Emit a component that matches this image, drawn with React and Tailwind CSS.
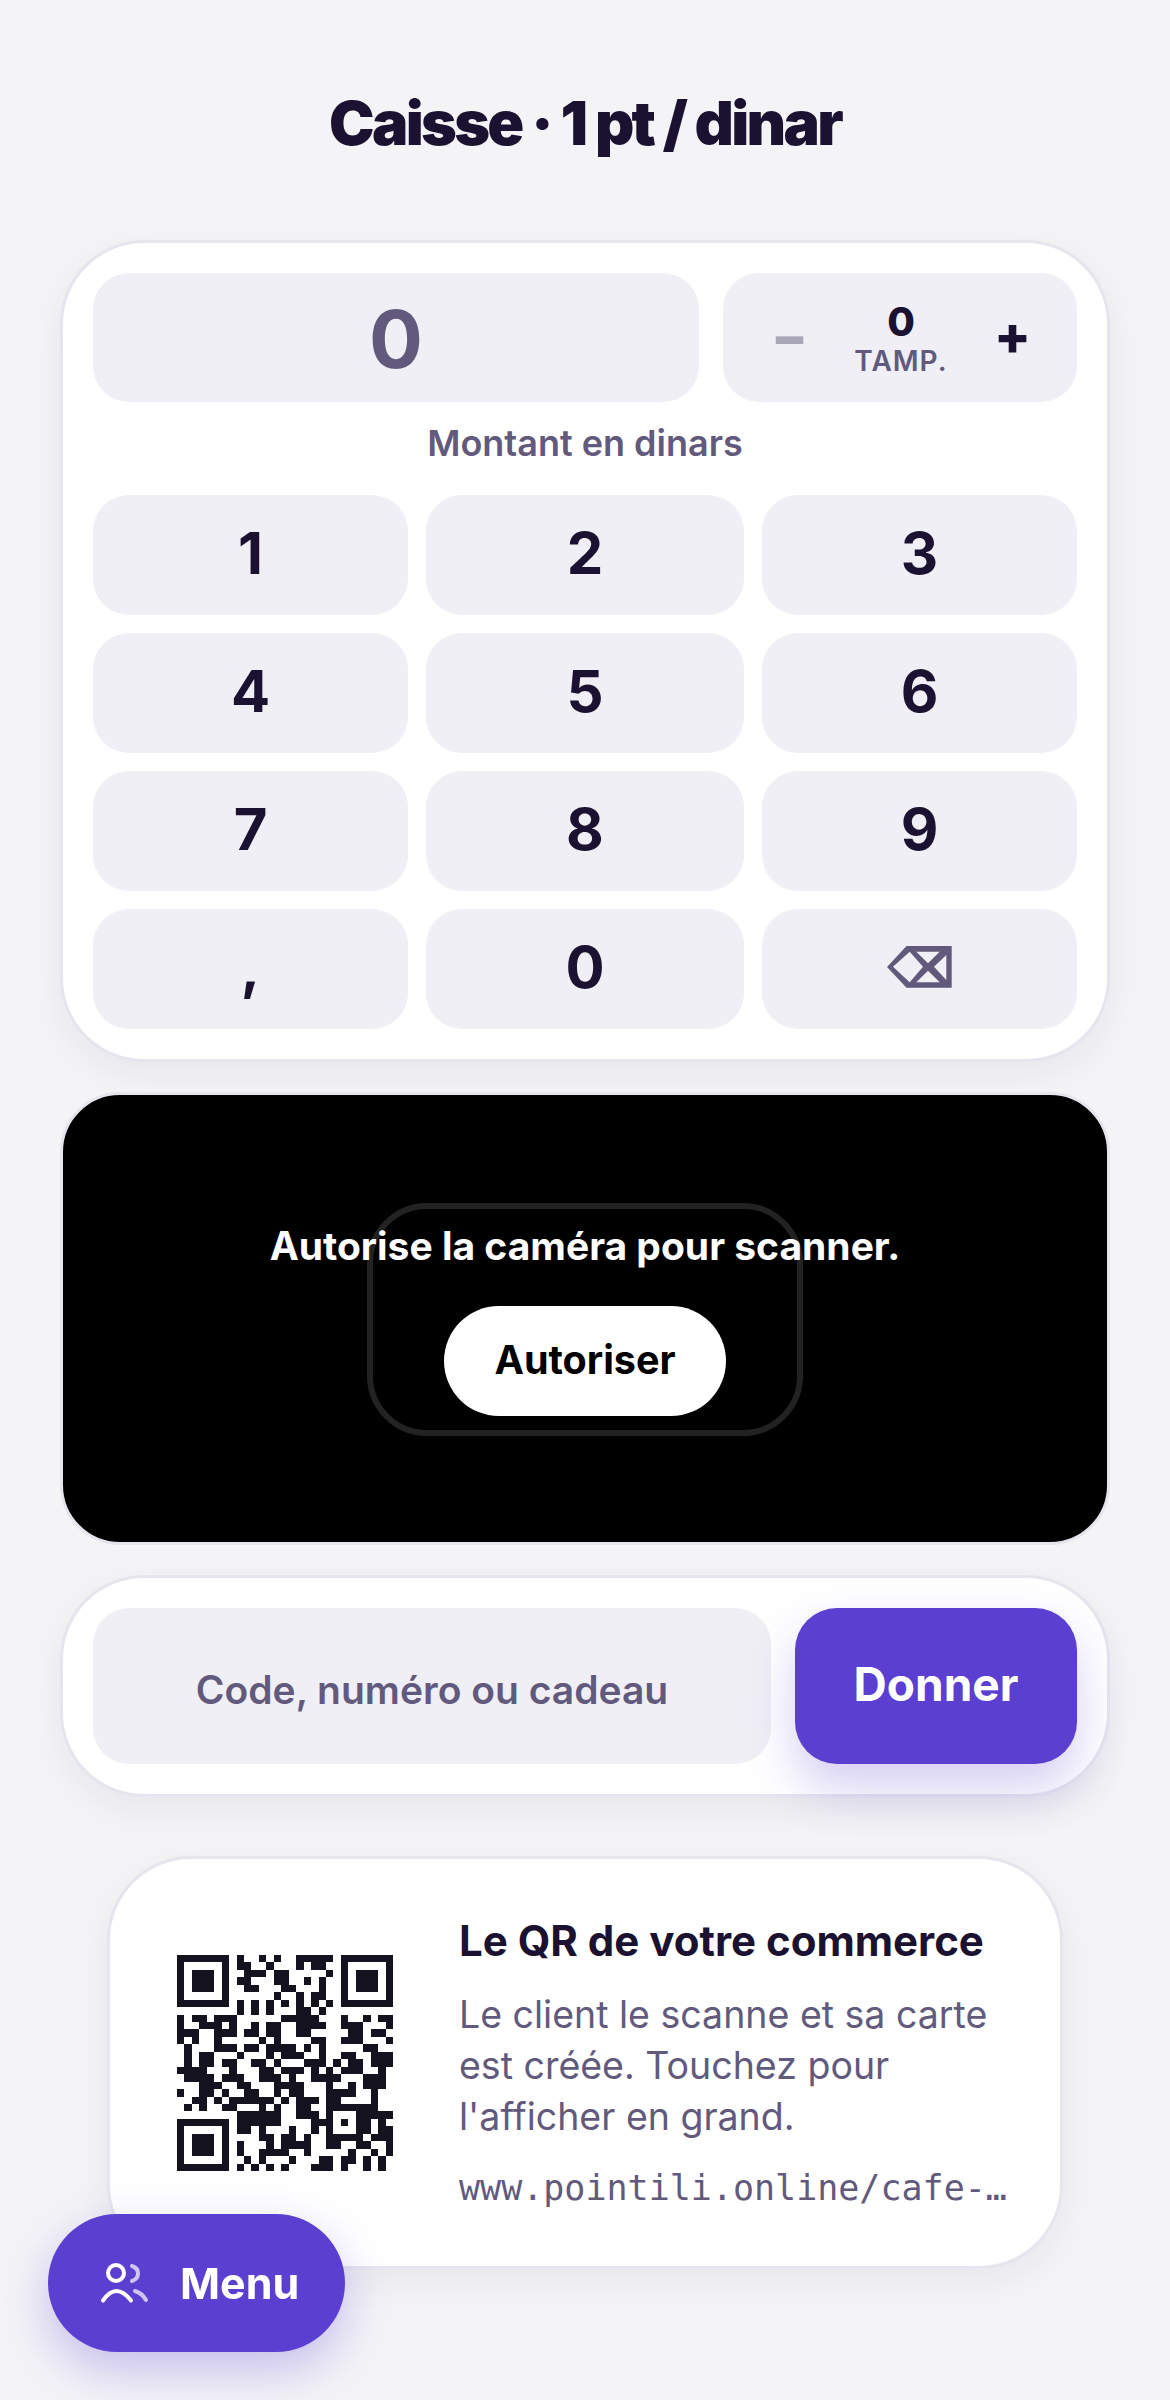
import React from 'react';

// rows of the QR, as [start, end] module spans (finders are drawn by the same data)
const QR_ROWS = [
  [[0,6],[8,8],[11,11],[13,13],[16,20],[22,28]],
  [[0,0],[6,6],[8,9],[12,12],[16,16],[18,19],[22,22],[28,28]],
  [[0,0],[2,4],[6,6],[9,11],[13,14],[20,20],[22,22],[24,26],[28,28]],
  [[0,0],[2,4],[6,6],[8,9],[13,14],[17,17],[19,19],[22,22],[24,26],[28,28]],
  [[0,0],[2,4],[6,6],[9,10],[14,15],[19,19],[22,22],[24,26],[28,28]],
  [[0,0],[6,6],[13,13],[16,16],[18,19],[22,22],[28,28]],
  [[0,6],[8,8],[10,10],[12,12],[14,14],[16,16],[18,18],[20,20],[22,28]],
  [[8,8],[10,10],[12,12],[16,17],[19,19]],
  [[0,0],[2,3],[5,7],[14,18],[22,22],[25,25],[27,28]],
  [[0,0],[3,5],[7,7],[10,10],[12,13],[16,19],[22,24],[28,28]],
  [[0,2],[5,7],[9,10],[12,13],[16,17],[23,24],[26,27]],
  [[0,0],[2,2],[5,5],[11,11],[13,13],[18,19],[22,24],[28,28]],
  [[1,1],[5,7],[9,10],[12,15],[17,17],[19,19],[25,26]],
  [[1,1],[3,4],[8,8],[12,12],[14,16],[19,19],[22,23],[26,28]],
  [[1,1],[3,4],[6,7],[10,11],[13,13],[17,19],[21,21],[23,24],[26,28]],
  [[0,3],[7,7],[11,12],[14,16],[18,18],[20,20],[22,24],[27,27]],
  [[1,4],[6,8],[11,13],[15,15],[18,21],[25,27]],
  [[3,5],[8,9],[13,16],[20,20],[23,23],[25,27]],
  [[0,0],[3,4],[6,6],[9,10],[13,13],[15,16],[20,23],[26,26]],
  [[2,3],[5,5],[7,12],[14,14],[16,18],[20,21],[26,26]],
  [[1,1],[3,3],[6,7],[11,11],[13,13],[16,17],[20,26]],
  [[8,13],[16,18],[20,20],[24,28]],
  [[0,6],[8,13],[18,20],[22,22],[24,25],[27,27]],
  [[0,0],[6,6],[8,9],[11,11],[15,15],[18,18],[20,20],[24,25],[27,28]],
  [[0,0],[2,4],[6,6],[11,12],[14,15],[17,17],[20,24],[26,28]],
  [[0,0],[2,4],[6,6],[8,8],[12,12],[14,17],[20,21],[24,25],[28,28]],
  [[0,0],[2,4],[6,6],[8,8],[11,14],[17,17],[23,23],[26,26],[28,28]],
  [[0,0],[6,6],[9,9],[11,11],[15,15],[19,20],[22,23],[25,25],[27,27]],
  [[0,6],[8,8],[10,10],[12,12],[14,14],[18,20],[22,22],[25,25],[27,27]],
];

const qrPath = QR_ROWS.map((spans, y) =>
  spans.map(([a, b]) => `M${a} ${y}h${b - a + 1}v1h-${b - a + 1}z`).join('')
).join('');

const KEYS = ['1', '2', '3', '4', '5', '6', '7', '8', '9', ','];

const Key = ({ children }) => (
  <button className="flex h-[120px] items-center justify-center rounded-[36px] bg-[#f0eff5] pb-[4px] text-[58px] font-bold text-[#1a1230]">
    {children}
  </button>
);

const App = () => {
  return (
    <div className="relative min-h-[2400px] bg-[#f4f4f7] px-[60px] font-['Inter',sans-serif] text-[#1a1230]">
      <div className="flex h-[240px] items-center justify-center pt-[8px]">
        <h1 className="text-[61px] font-black tracking-[-2.7px]">Caisse · 1 pt / dinar</h1>
      </div>

      {/* Keypad */}
      <div className="rounded-[84px] border-[3px] border-[#e6e5ee] bg-white p-[30px] shadow-[0_12px_36px_rgba(26,18,48,0.06)]">
        <div className="flex gap-[24px]">
          <div className="flex h-[129px] w-[606px] items-center justify-center rounded-[36px] bg-[#f0eff5] pt-[3px] text-[80px] font-bold text-[#625a7d]">
            0
          </div>
          <div className="flex h-[129px] flex-1 items-center justify-between rounded-[36px] bg-[#f0eff5] pl-[48px] pr-[46px]">
            <span className="pb-[2px] text-[54px] font-extrabold text-[#a9a6b8]">−</span>
            <div className="flex flex-col items-center">
              <span className="text-[40px] leading-[46px] font-extrabold">0</span>
              <span className="text-[28px] leading-[32px] font-semibold tracking-[1px] text-[#625a7d]">TAMP.</span>
            </div>
            <span className="pb-[4px] text-[54px] font-extrabold">+</span>
          </div>
        </div>
        <div className="mt-[18px] mb-[29px] h-[46px] text-center text-[36px] leading-[46px] font-semibold text-[#625a7d]">
          Montant en dinars
        </div>
        <div className="grid grid-cols-[315px_318px_315px] gap-[18px]">
          {KEYS.map(k => <Key key={k}>{k}</Key>)}
          <Key>0</Key>
          <button aria-label="Effacer" className="flex h-[120px] items-center justify-center rounded-[36px] bg-[#f0eff5] pb-[4px]">
            <svg width="65" height="42" viewBox="0 0 65 42" fill="#625a7d" fillRule="evenodd">
              <path d="M0 21L19.5 0H64.7V41.7H19.5ZM29.3 5.7H52.7L41 17.3ZM59.3 9V34L47 20.7ZM29.3 36.3H52.7L41 24.7ZM6 20.7L22.7 5.7L36 20.7L22.7 36.3Z" />
            </svg>
          </button>
        </div>
      </div>

      {/* Scanner */}
      <div className="relative mt-[30px] flex h-[453px] flex-col items-center justify-center rounded-[60px] border-[3px] border-[#e6e5ee] bg-black">
        <div className="absolute left-[304px] top-[108px] h-[233px] w-[436px] rounded-[60px] border-[6px] border-[#222222]"></div>
        <p className="relative text-[39px] leading-[50px] font-bold text-white">Autorise la caméra pour scanner.</p>
        <button className="relative mt-[35px] h-[110px] w-[282px] rounded-full bg-white text-[39.5px] font-bold text-black">
          Autoriser
        </button>
      </div>

      {/* Code */}
      <div className="mt-[30px] flex gap-[24px] rounded-[84px] border-[3px] border-[#e6e5ee] bg-white p-[30px] shadow-[0_12px_36px_rgba(26,18,48,0.06)]">
        <div className="flex h-[156px] flex-1 items-center justify-center rounded-[36px] bg-[#f0eff5] pt-[8px] text-[39px] font-semibold text-[#625a7d]">
          Code, numéro ou cadeau
        </div>
        <button className="h-[156px] w-[282px] rounded-[42px] bg-[#5a3fd0] pb-[4px] text-[46px] font-bold text-white shadow-[0_24px_48px_rgba(90,63,208,0.25)]">
          Donner
        </button>
      </div>

      {/* QR */}
      <div className="mx-[47px] mt-[59px] flex h-[413px] items-center rounded-[84px] border-[3px] border-[#e6e5ee] bg-white pl-[67px] pr-[48px] shadow-[0_12px_36px_rgba(26,18,48,0.06)]">
        <svg width="216" height="216" viewBox="0 0 29 29" shapeRendering="crispEdges" className="shrink-0">
          <path d={qrPath} fill="#15121f" />
        </svg>
        <div className="ml-[66px] min-w-0 flex-1">
          <h2 className="text-[42px] leading-[52px] font-bold">Le QR de votre commerce</h2>
          <p className="mt-[22px] text-[37.5px] leading-[51px] text-[#625a7d]">
            Le client le scanne et sa carte est créée. Touchez pour l'afficher en grand.
          </p>
          <p className="mt-[23px] truncate font-['DejaVu_Sans_Mono',monospace] text-[35px] leading-[46px] text-[#625a7d]">
            www.pointili.online/cafe-central
          </p>
        </div>
      </div>

      {/* Menu */}
      <button className="fixed left-[48px] top-[2214px] flex h-[138px] w-[297px] items-center gap-[30px] rounded-full bg-[#5a3fd0] pl-[52px] text-[43px] font-bold text-white shadow-[0_18px_48px_rgba(90,63,208,0.3)]">
        <svg width="50" height="44" viewBox="0 0 50 44" fill="none" stroke="white" strokeWidth="4" strokeLinecap="round">
          <circle cx="16" cy="12" r="8" />
          <path d="M3 39.5Q16 20.5 31 39.5" />
          <path d="M32 5Q38 7 38 12.5Q38 18 32 20" opacity="0.7" />
          <path d="M35 30Q42 32 46 39" opacity="0.7" />
        </svg>
        Menu
      </button>
    </div>
  );
};

export default App;
